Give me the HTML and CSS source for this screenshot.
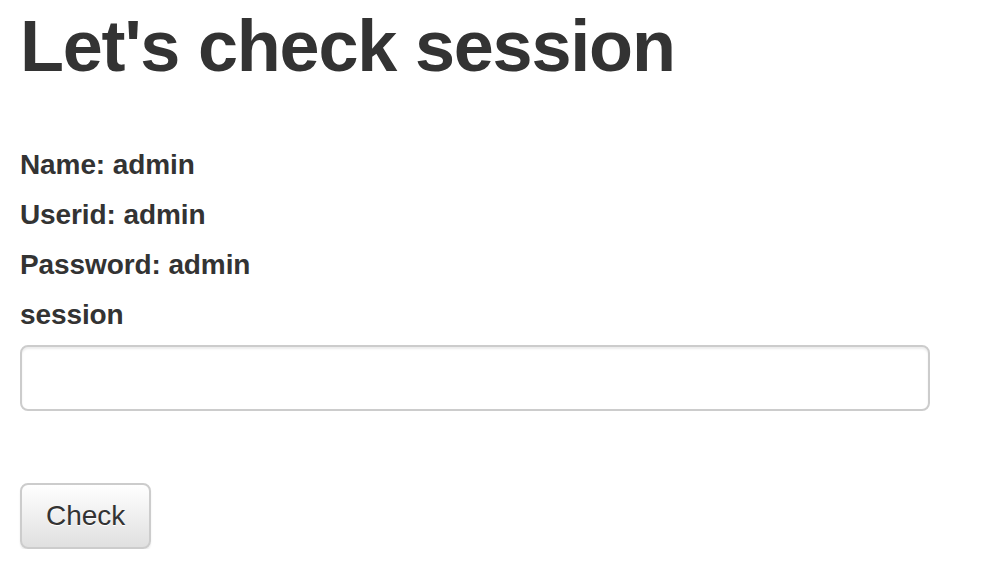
FILE: index.html
```html
<!DOCTYPE html>
<html lang="en">
<head>
  <meta charset="UTF-8" />
  <title>Let's check session</title>
  <link rel="stylesheet" href="styles.css">
</head>
<body>
  <div class="page">
    <h1 class="title">Let's check session</h1>

    <form class="session-form">
      <div class="info">
        <label class="info-line">Name: admin</label>
        <label class="info-line">Userid: admin</label>
        <label class="info-line">Password: admin</label>
      </div>

      <div class="form-group">
        <label class="info-line" for="session">session</label>
        <input class="form-control" id="session" type="text" />
      </div>

      <button class="btn" type="button">Check</button>
    </form>
  </div>
</body>
</html>
```

FILE: styles.css
```css
*, *::before, *::after {
  box-sizing: border-box;
}

body {
  margin: 0;
  font-family: "Liberation Sans", Helvetica, Arial, sans-serif;
  font-size: 28px;
  line-height: 40px;
  color: #333;
  background: #fff;
}

.page {
  padding: 7px 20px 0;
}

/* Heading */
.title {
  margin: 0 0 59px;
  font-size: 72px;
  font-weight: 700;
  letter-spacing: -1.2px;
  line-height: 1.1;
}

/* Form */
.session-form {
  max-width: 910px;
}

.info-line {
  display: block;
  margin-bottom: 10px;
  font-weight: 700;
  letter-spacing: -0.1px;
}

.form-group {
  margin-bottom: 72px;
}

.form-control {
  display: block;
  width: 100%;
  height: 66px;
  padding: 12px 24px;
  font: inherit;
  color: #555;
  background: #fff;
  border: 2px solid #ccc;
  border-radius: 8px;
  box-shadow: inset 0 2px 2px rgba(0, 0, 0, 0.075);
  outline: none;
}

.btn {
  display: inline-block;
  height: 66px;
  padding: 11px 24px;
  font: inherit;
  line-height: 40px;
  color: #333;
  text-shadow: 0 1px 0 #fff;
  background: linear-gradient(to bottom, #fff 0%, #e0e0e0 100%);
  border: 2px solid #ccc;
  border-radius: 8px;
  box-shadow: inset 0 2px 0 rgba(255, 255, 255, 0.15), 0 2px 2px rgba(0, 0, 0, 0.075);
  cursor: pointer;
}
```
